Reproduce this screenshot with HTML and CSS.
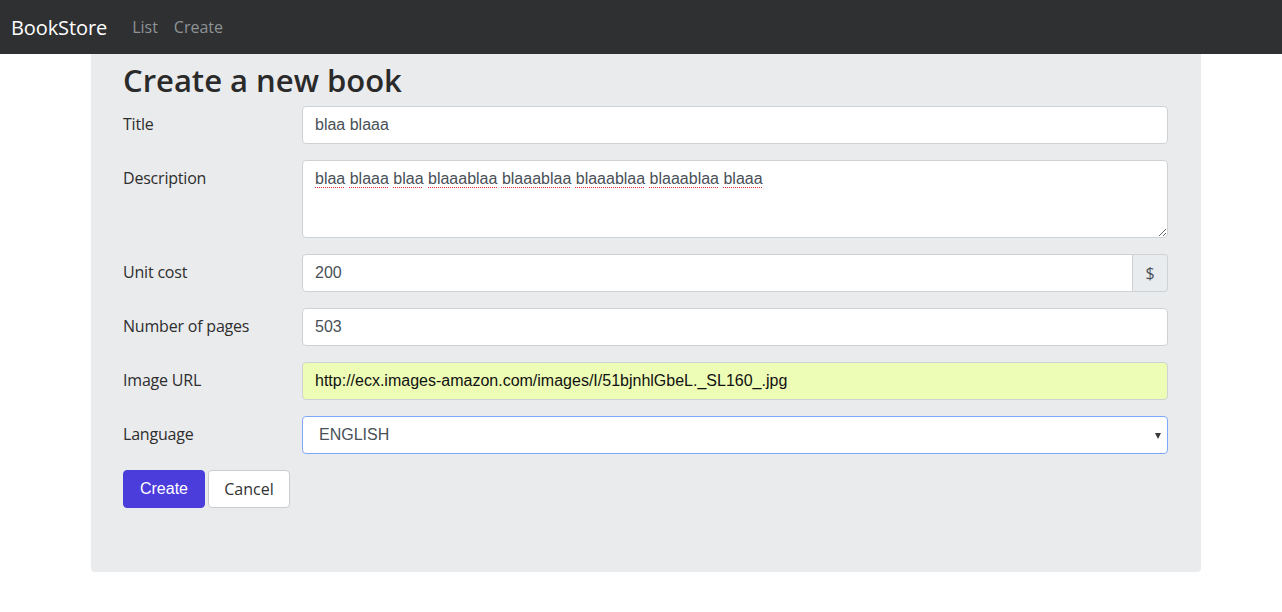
FILE: index.html
```html
<!DOCTYPE html>
<html>
<head>
<meta charset="utf-8">
<link rel="stylesheet" href="styles.css">
</head>
<body>
<nav class="navbar">
  <a class="brand" href="#">BookStore</a>
  <a class="nav-link" href="#">List</a>
  <a class="nav-link" href="#">Create</a>
</nav>
<main class="container">
  <h1 class="title">Create a new book</h1>
  <form class="form">
    <div class="row">
      <label class="label">Title</label>
      <input class="control" type="text" value="blaa blaaa">
    </div>
    <div class="row">
      <label class="label">Description</label>
      <div class="control textarea"><span class="sp">blaa</span> <span class="sp">blaaa</span> <span class="sp">blaa</span> <span class="sp">blaaablaa</span> <span class="sp">blaaablaa</span> <span class="sp">blaaablaa</span> <span class="sp">blaaablaa</span> <span class="sp">blaaa</span></div>
    </div>
    <div class="row">
      <label class="label">Unit cost</label>
      <div class="group">
        <input class="control group-input" type="text" value="200">
        <span class="addon">$</span>
      </div>
    </div>
    <div class="row">
      <label class="label">Number of pages</label>
      <input class="control" type="text" value="503">
    </div>
    <div class="row">
      <label class="label">Image URL</label>
      <input class="control autofill" type="text" value="http://ecx.images-amazon.com/images/I/51bjnhlGbeL._SL160_.jpg">
    </div>
    <div class="row">
      <label class="label">Language</label>
      <div class="control select"><span>ENGLISH</span><span class="caret"></span></div>
    </div>
    <div class="actions">
      <button class="btn btn-primary" type="button">Create</button>
      <button class="btn btn-default" type="button">Cancel</button>
    </div>
  </form>
</main>
</body>
</html>
```
FILE: styles.css
```css
* { box-sizing: border-box; }
html, body { margin: 0; padding: 0; background: #fff; }
body { font-family: "Open Sans", "DejaVu Sans", sans-serif; color: #333; }

.navbar {
  height: 54px;
  background: #2f3032;
  display: flex;
  align-items: center;
  padding: 0 11px;
}
.brand {
  color: #fff;
  text-decoration: none;
  font-size: 20px;
  margin-right: 25px;
  letter-spacing: -0.1px;
}
.nav-link {
  color: #8e9396;
  text-decoration: none;
  font-size: 16px;
  margin-right: 16px;
}

.container {
  width: 1110px;
  margin: 0 0 0 91px;
  background: #eaebed;
  border-radius: 0 0 4px 4px;
  padding: 6px 33px 64px 32px;
}
.title {
  margin: 0 0 6px;
  font-size: 31px;
  font-weight: 600;
  line-height: 40px;
  color: #2a2a2a;
  letter-spacing: 0;
}
.form { display: flex; flex-direction: column; gap: 16px; }
.row {
  display: grid;
  grid-template-columns: 179px 1fr;
  align-items: start;
}
.label {
  font-size: 16px;
  padding-top: 7px;
  line-height: 22px;
  color: #2e2e2e;
  letter-spacing: -0.2px;
}
.control {
  height: 38px;
  width: 100%;
  border: 1px solid #cfd2d5;
  border-radius: 4px;
  background: #fff;
  padding: 6px 12px;
  font-family: "Liberation Sans", Arial, sans-serif;
  font-size: 16px;
  color: #495057;
  outline: none;
}
.textarea {
  height: 78px;
  line-height: 24px;
  padding-top: 6px;
  resize: vertical;
  overflow: auto;
}
.sp {
  text-decoration-line: underline;
  text-decoration-style: dotted;
  text-decoration-color: #f03030;
  text-decoration-thickness: 1px;
  text-underline-offset: 3px;
}
.group { display: flex; }
.group-input { border-radius: 4px 0 0 4px; flex: 1; }
.addon {
  width: 35px;
  height: 38px;
  border: 1px solid #cfd2d5;
  border-left: none;
  border-radius: 0 4px 4px 0;
  background: #e9ecef;
  display: flex;
  align-items: center;
  justify-content: center;
  font-size: 16px;
  color: #495057;
}
.autofill { background: #eefdb6; color: #111; }
.select {
  border-color: #80a8f8;
  display: flex;
  align-items: center;
  justify-content: space-between;
  padding-left: 16px;
  padding-right: 6px;
}
.caret {
  width: 0; height: 0;
  border-left: 3.5px solid transparent;
  border-right: 3.5px solid transparent;
  border-top: 6px solid #3a3a3a;
  margin-top: 2px;
}
.actions { display: flex; gap: 3px; }
.btn {
  height: 38px;
  width: 82px;
  border-radius: 4px;
  font-size: 16px;
  cursor: pointer;
}
.btn-primary {
  background: #4b3cdc;
  border: 1px solid #4b3cdc;
  color: #fff;
  font-family: "Liberation Sans", Arial, sans-serif;
}
.btn-default {
  background: #fff;
  border: 1px solid #ccc;
  color: #333;
  font-family: "Open Sans", sans-serif;
}
```
